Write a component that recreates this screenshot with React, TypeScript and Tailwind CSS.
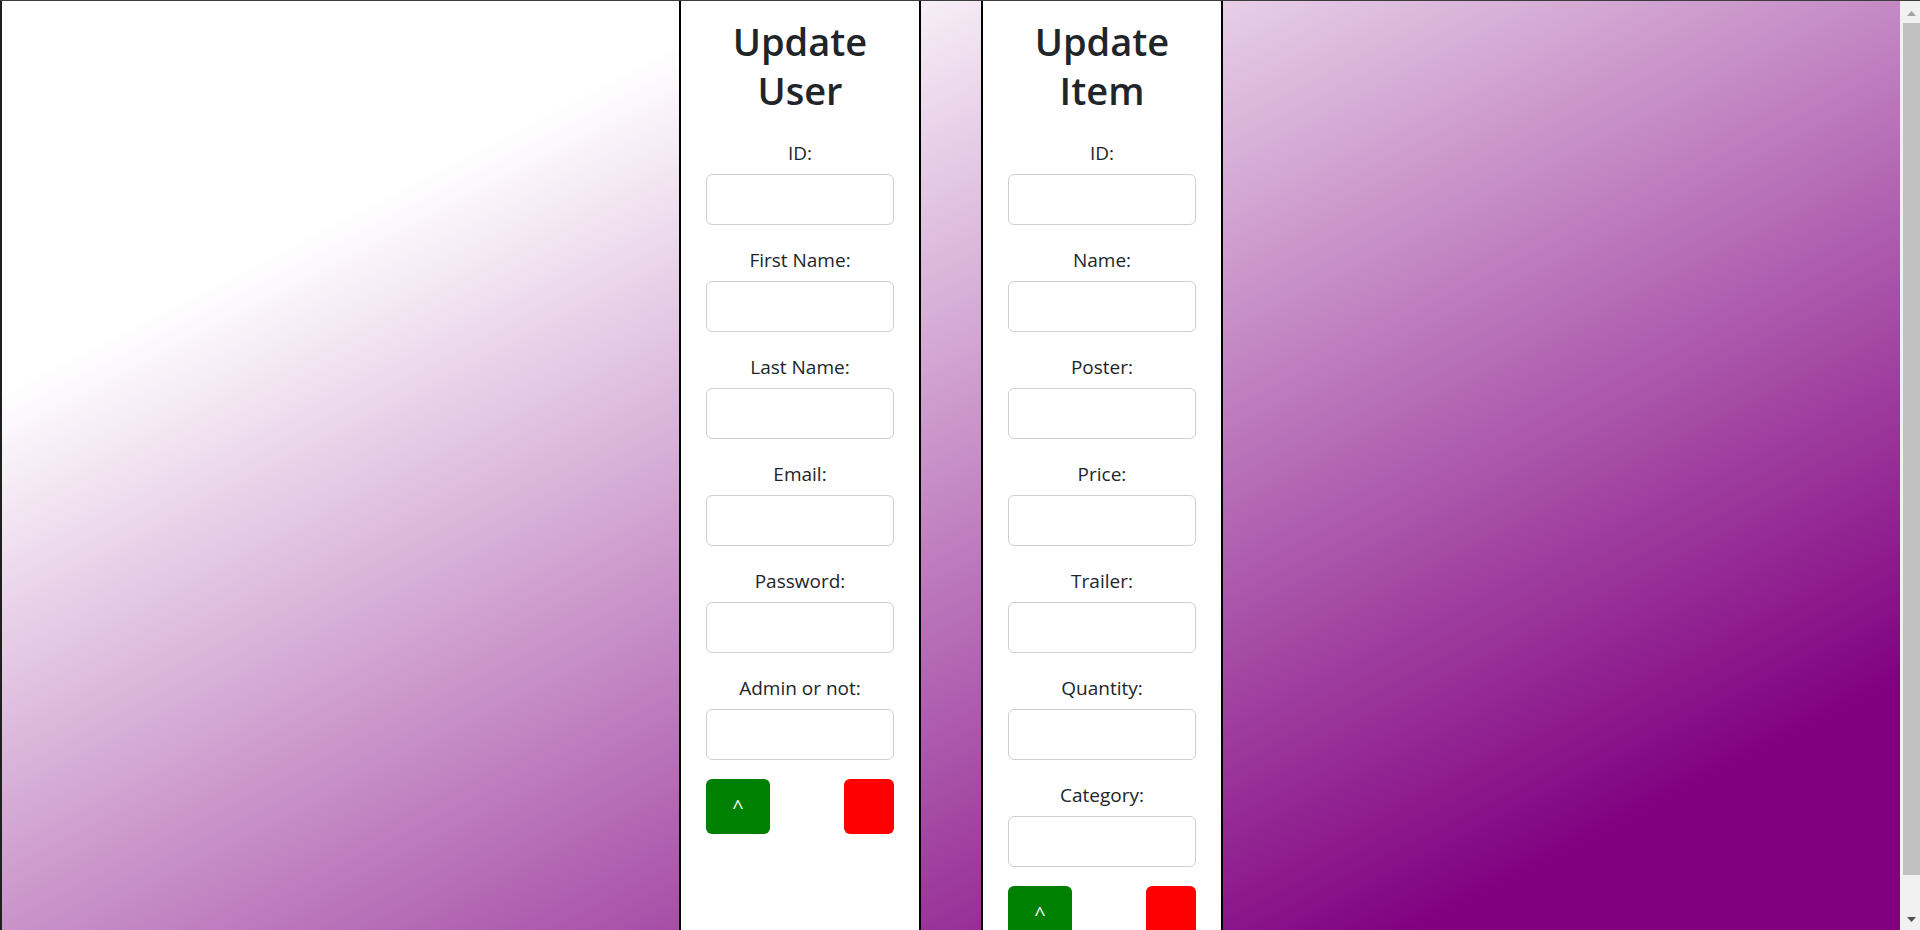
import React from "react";

const userFields = ["ID:", "First Name:", "Last Name:", "Email:", "Password:", "Admin or not:"];
const itemFields = ["ID:", "Name:", "Poster:", "Price:", "Trailer:", "Quantity:", "Category:"];

function Panel({ title, fields }: { title: string; fields: string[] }) {
  return (
    <div className="w-[242px] bg-white border-x-2 border-b-2 border-black flex flex-col items-center pt-[16px] pb-[36px]">
      <h1 className="w-[180px] text-center text-[38px] leading-[49px] font-semibold text-[#212529] m-0">
        {title}
      </h1>
      <div className="mt-[22.5px] flex flex-col gap-[20px] w-[188px]">
        {fields.map((f) => (
          <div key={f} className="flex flex-col items-center">
            <label className="text-[19px] leading-[30px] text-[#212529]">{f}</label>
            <input
              type="text"
              className="mt-[6px] w-[188px] h-[51px] rounded-[6px] border border-[#cfcfcf] bg-white outline-none"
            />
          </div>
        ))}
      </div>
      <div className="mt-[19.5px] w-[188px] flex justify-between">
        <button className="w-[64px] h-[55px] rounded-[6px] bg-[#008000] text-white text-[20px] leading-[28px] flex items-center justify-center">
          ^
        </button>
        <button className="w-[50px] h-[55px] rounded-[6px] bg-[#ff0000]" />
      </div>
    </div>
  );
}

function Scrollbar() {
  return (
    <div className="w-[20px] h-screen shrink-0 bg-[#f1f1f1] flex flex-col items-center">
      <div className="h-[22px] w-full flex items-start justify-center pt-[10px] pl-[2px]">
        <svg width="9" height="5" viewBox="0 0 9 5">
          <polygon points="4.5,0 9,5 0,5" fill="#a3a3a3" />
        </svg>
      </div>
      <div className="ml-[3px] w-[17px] h-[852px] bg-[#c1c1c1]" />
      <div className="flex-1 w-full flex items-end justify-center pb-[9px] pl-[2px]">
        <svg width="9" height="5" viewBox="0 0 9 5">
          <polygon points="0,0 9,0 4.5,5" fill="#505050" />
        </svg>
      </div>
    </div>
  );
}

export default function App() {
  return (
    <div className="min-h-screen flex items-start border-t border-[#3c3c3c] font-['Open_Sans',sans-serif]">
      <div className="flex-1 self-stretch pl-[2px] shadow-[inset_2px_0_0_#1f1f1f] bg-[linear-gradient(to_bottom_right,#ffffff_20%,#800080_85%)] flex justify-center items-stretch gap-[60px]">
        <Panel title="Update User" fields={userFields} />
        <Panel title="Update Item" fields={itemFields} />
      </div>
      <Scrollbar />
    </div>
  );
}
